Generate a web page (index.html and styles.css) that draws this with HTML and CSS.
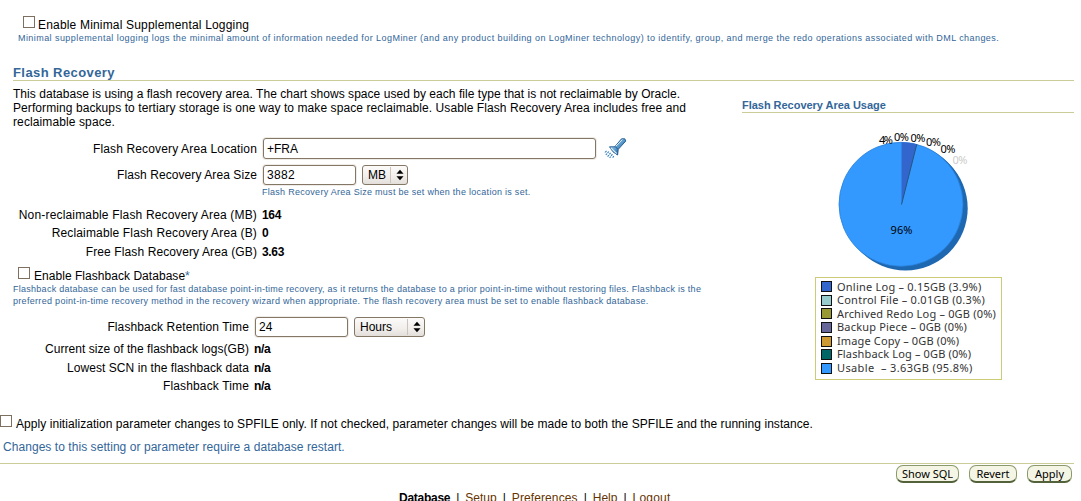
FILE: index.html
```html
<!DOCTYPE html>
<html lang="en">
<head>
<meta charset="utf-8">
<title>Recovery Settings</title>
<link rel="stylesheet" href="styles.css">
</head>
<body>
<main class="page">
  <section class="logging">
    <label class="option option-log"><span class="check"></span><span class="t-log">Enable Minimal Supplemental Logging</span></label>
    <p class="hint hint-log">Minimal supplemental logging logs the minimal amount of information needed for LogMiner (and any product building on LogMiner technology) to identify, group, and merge the redo operations associated with DML changes.</p>
  </section>
  <h2 class="heading">Flash Recovery</h2>
  <div class="columns">
    <section class="settings">
      <p class="intro"><span class="i1">This database is using a flash recovery area. The chart shows space used by each file type that is not reclaimable by Oracle.</span><br><span class="i2">Performing backups to tertiary storage is one way to make space reclaimable. Usable Flash Recovery Area includes free and</span><br><span class="i3">reclaimable space.</span></p>
      <div class="form form-area">
        <div class="row row-location">
          <span class="label l-loc">Flash Recovery Area Location</span>
          <span class="input wide">+FRA</span>
          <svg class="torch" width="24" height="22" viewBox="0 0 24 22">
            <defs><linearGradient id="tg" x1="0" y1="0" x2="1" y2="1"><stop offset="0" stop-color="#b5d8ee"/><stop offset=".5" stop-color="#5b9acb"/><stop offset="1" stop-color="#174d8c"/></linearGradient></defs>
            <path d="M17.5 .8 L20.8 .8 L21.8 3 L14 11.6 L10.8 8.8 Z" fill="url(#tg)" stroke="#1d568f" stroke-width=".9"/>
            <path d="M18.4 1.6 L11.6 8.4" stroke="#d7edf8" stroke-width="1"/>
            <path d="M5.5 8.8 L11.5 8.8 L14.2 11.7 L13.6 17 Q8.2 14.5 5.5 8.8Z" fill="url(#tg)" stroke="#1d568f" stroke-width=".9"/>
            <path d="M6.8 9.8 L12.7 15.5" stroke="#d7edf8" stroke-width="1.1"/>
            <path d="M2.5 12.8 L.5 15 M4.8 13.5 L1.8 17 M6.6 14.8 L3.6 18.6 M8.4 16.2 L5.6 20 M9.8 18 L8.4 20.2" stroke="#347fc4" stroke-width="1.1" stroke-dasharray="2 .8"/>
          </svg>
        </div>
        <div class="row row-size">
          <span class="label l-size">Flash Recovery Area Size</span>
          <span class="input short size">3882</span>
          <span class="select sel-mb"><span class="sel-text">MB</span><svg class="arrows" width="9" height="12" viewBox="0 0 9 12"><path d="M4.5 0 8.5 4.6H.5ZM.5 7.4h8L4.5 12Z"/></svg></span>
        </div>
        <p class="hint hint-size">Flash Recovery Area Size must be set when the location is set.</p>
        <div class="row r18 first"><span class="label l-non">Non-reclaimable Flash Recovery Area (MB)</span><b>164</b></div>
        <div class="row r18"><span class="label l-rec">Reclaimable Flash Recovery Area (B)</span><b>0</b></div>
        <div class="row r19"><span class="label l-free">Free Flash Recovery Area (GB)</span><b>3.63</b></div>
      </div>
      <label class="option option-fb"><span class="check"></span><span class="t-fb">Enable Flashback Database<span class="star">*</span></span></label>
      <p class="hint hint-fb"><span class="f1">Flashback database can be used for fast database point-in-time recovery, as it returns the database to a prior point-in-time without restoring files. Flashback is the</span><br><span class="f2">preferred point-in-time recovery method in the recovery wizard when appropriate. The flash recovery area must be set to enable flashback database.</span></p>
      <div class="form form-fb">
        <div class="row row-time">
          <span class="label l-ret">Flashback Retention Time</span>
          <span class="input short">24</span>
          <span class="select sel-hours"><span class="sel-text">Hours</span><svg class="arrows" width="9" height="12" viewBox="0 0 9 12"><path d="M4.5 0 8.5 4.6H.5ZM.5 7.4h8L4.5 12Z"/></svg></span>
        </div>
        <div class="row r18 gap"><span class="label l-cur">Current size of the flashback logs(GB)</span><b class="na">n/a</b></div>
        <div class="row r19"><span class="label l-scn">Lowest SCN in the flashback data</span><b class="na">n/a</b></div>
        <div class="row r18"><span class="label l-time">Flashback Time</span><b class="na">n/a</b></div>
      </div>
    </section>
    <aside class="usage">
      <h3 class="subheading">Flash Recovery Area Usage</h3>
      <svg class="pie" width="160" height="150" viewBox="822 125 160 150">
        <circle cx="905.5" cy="208.2" r="62.2" fill="#1e68b2"/>
        <circle cx="903.5" cy="206" r="62.2" fill="#1e68b2"/>
        <circle cx="901" cy="204.3" r="62" fill="#3399ff" stroke="#287fd6" stroke-width=".8"/>
        <path d="M901.5 204.5V142.3A62 62 0 0 1 916.8 144.2Z" fill="#3366cc"/>
        <path d="M901.5 204.5 916.8 144.2" stroke="#24577e" stroke-width="1"/>
        <g class="pie-text">
          <text x="879" y="144" textLength="14">4%</text>
          <text x="894" y="140.5" textLength="15">0%</text>
          <text x="910.5" y="141.5" textLength="15">0%</text>
          <text x="926" y="146" textLength="15">0%</text>
          <text x="940.5" y="153" textLength="15">0%</text>
          <text x="952.5" y="164" textLength="15" fill="#ccc">0%</text>
          <text x="890.5" y="234" textLength="22">96%</text>
        </g>
      </svg>
      <ul class="legend">
        <li><i class="sw c1"></i><span class="g1">Online Log – 0.15GB (3.9%)</span></li>
        <li><i class="sw c2"></i><span class="g2">Control File – 0.01GB (0.3%)</span></li>
        <li><i class="sw c3"></i><span class="g3">Archived Redo Log – 0GB (0%)</span></li>
        <li><i class="sw c4"></i><span class="g4">Backup Piece – 0GB (0%)</span></li>
        <li><i class="sw c5"></i><span class="g5">Image Copy – 0GB (0%)</span></li>
        <li><i class="sw c6"></i><span class="g6">Flashback Log – 0GB (0%)</span></li>
        <li><i class="sw c7"></i><span class="g7">Usable&nbsp; – 3.63GB (95.8%)</span></li>
      </ul>
    </aside>
  </div>
  <label class="option option-sp"><span class="check"></span><span class="t-sp">Apply initialization parameter changes to SPFILE only. If not checked, parameter changes will be made to both the SPFILE and the running instance.</span></label>
  <p class="restart">Changes to this setting or parameter require a database restart.</p>
  <div class="actions">
    <span class="btn b-sql">Show SQL</span><span class="btn b-rev">Revert</span><span class="btn b-app">Apply</span>
  </div>
  <nav class="footer"><b>Database</b><span>|</span><a>Setup</a><span>|</span><a class="prefs">Preferences</a><span>|</span><a>Help</a><span>|</span><a class="logout">Logout</a></nav>
</main>
</body>
</html>
```
FILE: styles.css
```css
* { box-sizing: border-box; }
html, body { margin: 0; height: 501px; overflow: hidden; background: #fff; }
body { font: 12px/14px "Liberation Sans", Arial, sans-serif; color: #000; }
p, h2, h3, ul { margin: 0; padding: 0; font-weight: normal; }
.page { width: 1074px; white-space: nowrap; }
.logging { height: 65px; padding: 16px 0 0 18px; }
.option { display: flex; }
.check { width: 12px; height: 12px; border: 1px solid #7d7061; background: #fff; flex: none; }
.option-log { padding-left: 5px; height: 16px; gap: 3px; }
.t-log { padding-top: 2px; letter-spacing: .18px; }
.hint { font-size: 9px; line-height: 12px; color: #336699; letter-spacing: .28px; }
.hint-log { letter-spacing: .436px; }
.heading { margin-left: 13px; height: 16px; font-size: 13px; line-height: 16px; font-weight: bold; color: #336699; letter-spacing: .42px; border-bottom: 1px solid #cccc99; }
.columns { display: grid; grid-template-columns: 742px 332px; height: 334px; }
.intro { padding: 6px 0 0 13px; height: 48px; }
.i1 { letter-spacing: .04px; }
.i2 { letter-spacing: .083px; }
.i3 { letter-spacing: .11px; }
.form { display: flex; flex-direction: column; }
.row { display: flex; align-items: center; }
.label { text-align: right; flex: none; }
.form-area .label { width: 257px; margin-right: 5px; }
.form-fb .label { width: 249px; margin-right: 5px; }
.l-loc { letter-spacing: .14px; }
.l-size { letter-spacing: .08px; }
.l-non { letter-spacing: .17px; }
.l-rec { letter-spacing: .15px; }
.l-free { letter-spacing: .11px; }
.l-ret { letter-spacing: .12px; }
.l-cur { letter-spacing: .03px; }
.l-scn { letter-spacing: .06px; }
.l-time { letter-spacing: .14px; }
.input { height: 21px; border: 1px solid #857766; border-radius: 3px; padding: 0 3px; line-height: 20px; background: #fff; box-shadow: 0 0 0 1px #efebe7; margin-left: 1px; }
.wide { width: 333px; }
.short { width: 93px; }
.row-location { height: 21px; margin-top: 9px; }
.torch { margin: 0 0 0 8px; }
.row-size { height: 20px; margin-top: 6px; }
.row-size .input { height: 20px; line-height: 19px; }
.size { letter-spacing: .35px; }
.select { display: flex; align-items: center; height: 20px; margin-left: 6px; border: 1px solid #857766; border-radius: 3px; background: linear-gradient(#fcfbfa, #f1eeeb 60%, #e3deda); }
.sel-mb { width: 46px; }
.sel-hours { width: 71px; }
.sel-text { flex: 1; padding-left: 5px; }
.arrows { flex: none; width: 17px; padding: 0 3px 0 5px; border-left: 1px solid #cbc4bc; height: 16px; }
.hint-size { margin: 1px 0 0 262px; height: 12px; }
.form b { letter-spacing: -.35px; }
.r18 { height: 18px; }
.r19 { height: 19px; }
.first { margin-top: 8px; }
.option-fb { padding: 6px 0 0 18px; gap: 4px; height: 22px; }
.t-fb { padding-top: 2px; letter-spacing: .04px; }
.star { color: #336699; }
.hint-fb { padding-left: 13px; }
.f1 { letter-spacing: .268px; }
.f2 { letter-spacing: .308px; }
.row-time { height: 20px; margin-top: 10px; }
.row-time .input { height: 20px; line-height: 18px; }
.gap { margin-top: 3px; }
.usage { padding-top: 17px; }
.subheading { height: 15px; font-size: 11px; line-height: 14px; font-weight: bold; color: #336699; letter-spacing: -.03px; border-bottom: 1px solid #cccc99; }
.pie { display: block; margin: 12px 0 0 80px; }
.pie-text { font: 11px "Noto Sans", sans-serif; }
.legend { list-style: none; margin: 2px 0 0 73px; width: 187px; height: 103px; border: 1px solid #cccc77; padding: 2px 5px; font: 11px/13.6px "Noto Sans", sans-serif; color: #333; }
.legend li { display: flex; align-items: center; height: 13.6px; gap: 5px; }
.legend span { margin-top: -1px; }
.g1 { letter-spacing: .23px; }
.g2 { letter-spacing: .25px; }
.g3 { letter-spacing: .19px; }
.g4 { letter-spacing: .19px; }
.g5 { letter-spacing: .14px; }
.g6 { letter-spacing: .15px; }
.g7 { letter-spacing: .37px; }
.sw { width: 11px; height: 11px; border: 1px solid #111; }
.c1 { background: #3366cc; }
.c2 { background: #99cccc; }
.c3 { background: #999933; }
.c4 { background: #666699; }
.c5 { background: #cc9933; }
.c6 { background: #006666; }
.c7 { background: #3399ff; }
.option-sp { gap: 4px; height: 25px; }
.t-sp { padding-top: 2px; letter-spacing: .055px; }
.restart { padding-left: 3px; height: 23px; color: #336699; letter-spacing: .055px; }
.actions { display: flex; justify-content: flex-end; gap: 10px; height: 27px; padding: 1px 2px 0 0; border-top: 1px solid #cccc99; }
.btn { height: 18px; border: 1px solid #8b9a6b; border-bottom: 2px solid #53623a; border-radius: 7px; background: #f4f5e4; font: 11px/15px "Noto Sans", sans-serif; text-align: center; }
.b-sql { width: 63px; }
.b-rev { width: 48px; }
.b-app { width: 45px; }
.footer { display: flex; gap: 6px; padding-left: 399px; margin-top: 1px; }
.footer b { letter-spacing: -.27px; }
.footer a { color: #663300; }
.prefs { letter-spacing: .1px; }
.logout { letter-spacing: .2px; }
```
